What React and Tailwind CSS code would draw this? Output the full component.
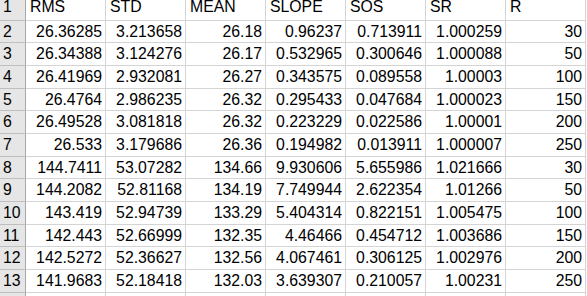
const headers = ['RMS', 'STD', 'MEAN', 'SLOPE', 'SOS', 'SR', 'R'];

const rows = [
  ['26.36285', '3.213658', '26.18', '0.96237', '0.713911', '1.000259', '30'],
  ['26.34388', '3.124276', '26.17', '0.532965', '0.300646', '1.000088', '50'],
  ['26.41969', '2.932081', '26.27', '0.343575', '0.089558', '1.00003', '100'],
  ['26.4764', '2.986235', '26.32', '0.295433', '0.047684', '1.000023', '150'],
  ['26.49528', '3.081818', '26.32', '0.223229', '0.022586', '1.00001', '200'],
  ['26.533', '3.179686', '26.36', '0.194982', '0.013911', '1.000007', '250'],
  ['144.7411', '53.07282', '134.66', '9.930606', '5.655986', '1.021666', '30'],
  ['144.2082', '52.81168', '134.19', '7.749944', '2.622354', '1.01266', '50'],
  ['143.419', '52.94739', '133.29', '5.404314', '0.822151', '1.005475', '100'],
  ['142.443', '52.66999', '132.35', '4.46466', '0.454712', '1.003686', '150'],
  ['142.5272', '52.36627', '132.56', '4.067461', '0.306125', '1.002976', '200'],
  ['141.9683', '52.18418', '132.03', '3.639307', '0.210057', '1.00231', '250'],
];

const RowHead = ({ n, first }) => (
  <div className={`flex pl-[3px] bg-[#e6e6e6] border-r border-b border-r-[#a6a6a6] border-b-[#bfbfbf] ${first ? 'items-end pb-[1px]' : 'items-center'}`}>
    {n}
  </div>
);

const App = () => {
  return (
    <div className="w-[587px] h-[296px] overflow-hidden bg-white text-black text-[15.8px] leading-normal" style={{ fontFamily: '"Liberation Sans", Arial, sans-serif' }}>
      <div className="grid grid-cols-[26px_repeat(7,80px)] grid-rows-[20.7px_repeat(13,22.67px)]">
        <RowHead n={1} first />
        {headers.map((h) => (
          <div key={h} className="flex items-end pb-[1px] pl-[4px] border-r border-b border-[#d4d4d4] whitespace-nowrap">
            {h}
          </div>
        ))}
        {rows.map((row, i) => (
          <div key={i} className="contents">
            <RowHead n={i + 2} />
            {row.map((v, j) => (
              <div key={j} className="flex items-center justify-end pr-[3px] border-r border-b border-[#d4d4d4] whitespace-nowrap">
                {v}
              </div>
            ))}
          </div>
        ))}
        <RowHead n={14} />
        {headers.map((h) => (
          <div key={h} className="border-r border-b border-[#d4d4d4]" />
        ))}
      </div>
    </div>
  );
};

export default App;
